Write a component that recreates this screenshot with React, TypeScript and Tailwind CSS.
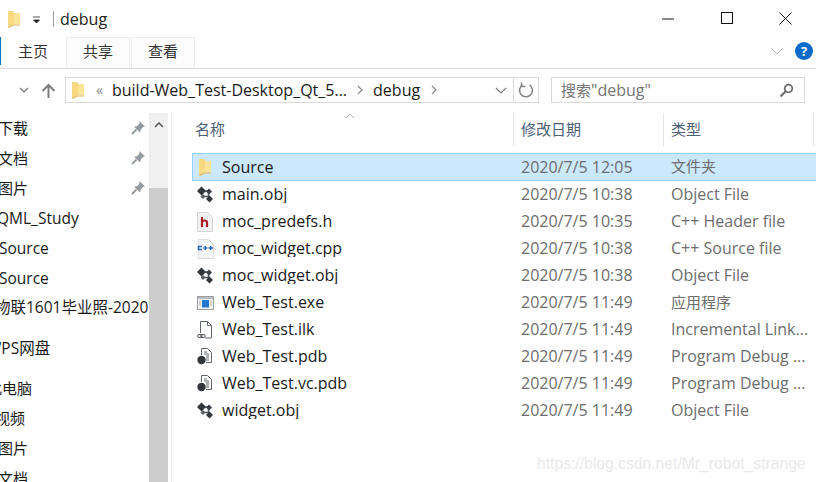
import React from "react";

const FONT = "font-['Open_Sans','Noto_Sans_CJK_SC',sans-serif]";

const FolderIcon = ({ className = "" }: { className?: string }) => (
  <svg width="14" height="18" viewBox="0 0 14 18" className={className}>
    <path d="M1 1h5l1 2h6v11H2.500L1 16z" fill="#f0c860" />
    <path d="M1 1h4.500L7 3v11.500l-6 2.500z" fill="#f7d97f" />
    <path d="M7 3h6v11H7z" fill="#fbe49a" />
    <path d="M1 17l6-2.500h6v1H6.500L2 18z" fill="#dfb24a" />
  </svg>
);

const ObjIcon = () => (
  <svg width="17" height="17" viewBox="0 0 17 17">
    <path d="M5 5h6.500v8M6 10.500h6" stroke="#4d5157" strokeWidth="1.500" fill="none" />
    <path d="M4.500.5L9 5 4.500 9.500 0 5z" fill="#33373c" />
    <path d="M12 2.500l3 3-3 3-3-3z" fill="#3d4147" />
    <path d="M12.500 9.500l3.500 3.500-3.500 3.500L9 13z" fill="#33373c" />
    <path d="M6 8l2.500 2.500L6 13l-2.500-2.500z" fill="#5d6167" />
  </svg>
);

const HeaderIcon = () => (
  <svg width="16" height="20" viewBox="0 0 16 20">
    <path d="M.5.500h10l5 5v14H.5z" fill="#f2f2f2" stroke="#d4d4d4" />
    <path d="M5 5v10M5 10q1-1.500 2.700-1.500 2.300 0 2.300 2v4.500" stroke="#ab1f2a" strokeWidth="2.200" fill="none" />
  </svg>
);

const CppIcon = () => (
  <svg width="17" height="20" viewBox="0 0 17 20">
    <path d="M1.500.500h10l5 5v14h-15z" fill="#f5f5f5" stroke="#dcdcdc" />
    <path d="M5 7.500H1.500v3H5" stroke="#2565b5" strokeWidth="1.500" fill="none" />
    <path d="M6.300 9h4M8.300 7v4M11.500 9h4.500M13.700 7v4" stroke="#2565b5" strokeWidth="1.400" fill="none" />
  </svg>
);

const ExeIcon = () => (
  <svg width="17" height="14" viewBox="0 0 17 14">
    <rect x=".5" y=".5" width="16" height="13" fill="#f2f2f2" stroke="#9a9ea3" />
    <rect x="1" y="1" width="15" height="2" fill="#b9bdc2" />
    <rect x="5" y="4" width="7" height="7.500" fill="#1f78d1" />
    <path d="M2 5h2M2 7h2M2 9h2M13 5h2M13 7h2M13 9h2" stroke="#b5b8bc" />
  </svg>
);

const IlkIcon = () => (
  <svg width="16" height="18" viewBox="0 0 16 18">
    <path d="M3.500 12V.5h7l4 4v12.500H8" fill="#fff" stroke="#63676d" />
    <path d="M10.500.5v4h4" fill="none" stroke="#63676d" />
    <rect x=".7" y="13.500" width="4.500" height="3" rx="1.400" fill="none" stroke="#4b4f55" />
    <rect x="3.700" y="13.500" width="4.500" height="3" rx="1.400" fill="none" stroke="#4b4f55" />
  </svg>
);

const PdbIcon = () => (
  <svg width="16" height="17" viewBox="0 0 16 17">
    <path d="M4.500 7V.5h6l4 4v10H9" fill="#fff" stroke="#63676d" />
    <path d="M7 4h3M7 6h5M9 8h3M9 10h3M9 12h3" stroke="#63676d" />
    <circle cx="4.500" cy="12" r="4.200" fill="#33373c" />
  </svg>
);

const PinIcon = () => (
  <svg width="14" height="14" viewBox="0 0 14 14">
    <path d="M8.500 0l5.500 5.500-2 .5-2.300 2.500-.5 3L3 5.800l3-.5L8.300 3z" fill="#939a9f" />
    <path d="M5.500 8.500L1 13" stroke="#939a9f" strokeWidth="1.800" />
  </svg>
);

const navItems = [
  { label: "下载", pin: true, cls: "h-[30px] -ml-[2px] text-[15px]" },
  { label: "文档", pin: true, cls: "h-[30px] -ml-[2px] text-[15px]" },
  { label: "图片", pin: true, cls: "h-[30px] -ml-[2px] text-[15px]" },
  { label: "QML_Study", cls: "h-[30px] pt-[2px] -ml-[3px] text-[15.500px]" },
  { label: "Source", cls: "h-[30px] pt-[1px] -ml-[1px] text-[15.500px]" },
  { label: "Source", cls: "h-[30px] pt-[1px] -ml-[1px] text-[15.500px]" },
  { label: "物联1601毕业照-2020", cls: "h-[30px] -ml-[5px] mb-[10px] text-[15.500px]" },
  { label: "WPS网盘", cls: "h-[30px] pt-[2px] -ml-[13px] mb-[10px] text-[15.500px]" },
  { label: "此电脑", cls: "h-[30px] -ml-[13px] text-[15px]" },
  { label: "视频", cls: "h-[30px] -ml-[5px] text-[15px]" },
  { label: "图片", cls: "h-[30px] -ml-[2px] text-[15px]" },
  { label: "文档", cls: "h-[30px] -ml-[2px] text-[15px]" },
];

const files = [
  { name: "Source", date: "2020/7/5 12:05", type: "文件夹", typeCls: "text-[15px]", icon: <FolderIcon />, selected: true },
  { name: "main.obj", date: "2020/7/5 10:38", type: "Object File", icon: <ObjIcon /> },
  { name: "moc_predefs.h", date: "2020/7/5 10:35", type: "C++ Header file", icon: <HeaderIcon /> },
  { name: "moc_widget.cpp", date: "2020/7/5 10:38", type: "C++ Source file", icon: <CppIcon /> },
  { name: "moc_widget.obj", date: "2020/7/5 10:38", type: "Object File", icon: <ObjIcon /> },
  { name: "Web_Test.exe", date: "2020/7/5 11:49", type: "应用程序", typeCls: "text-[15px]", icon: <ExeIcon /> },
  { name: "Web_Test.ilk", date: "2020/7/5 11:49", type: "Incremental Link...", icon: <IlkIcon /> },
  { name: "Web_Test.pdb", date: "2020/7/5 11:49", type: "Program Debug ...", icon: <PdbIcon /> },
  { name: "Web_Test.vc.pdb", date: "2020/7/5 11:49", type: "Program Debug ...", icon: <PdbIcon /> },
  { name: "widget.obj", date: "2020/7/5 11:49", type: "Object File", icon: <ObjIcon /> },
];

const App = () => {
  return (
    <div className={`relative w-[816px] h-[482px] overflow-hidden bg-white text-[16px] leading-none text-[#1a1a1a] ${FONT}`}>
      {/* title bar */}
      <div className="flex items-center h-[37px]">
        <FolderIcon className="ml-[7px]" />
        <svg width="9" height="8" viewBox="0 0 9 8" className="ml-[11px] mt-[2px]">
          <path d="M1 1h7M1.500 4h6l-3 3z" stroke="#222" fill="#222" strokeWidth=".8" />
        </svg>
        <div className="ml-[12px] w-px h-[16px] bg-[#a0a0a0]" />
        <div className="ml-[6px] text-[#222]">debug</div>
        <div className="flex ml-auto">
          <div className="flex w-[58px] justify-center mr-[1px]">
            <svg width="14" height="14" viewBox="0 0 14 14"><path d="M1 7h12" stroke="#111" /></svg>
          </div>
          <div className="flex w-[58px] justify-center">
            <svg width="13" height="13" viewBox="0 0 13 13"><rect x=".5" y=".5" width="11" height="11" fill="none" stroke="#111" /></svg>
          </div>
          <div className="flex w-[58px] justify-center mr-[2px]">
            <svg width="13" height="13" viewBox="0 0 13 13"><path d="M.5.5l12 12M12.500.5l-12 12" stroke="#111" /></svg>
          </div>
        </div>
      </div>

      {/* ribbon tabs */}
      <div className="flex items-stretch h-[32px] border-b border-[#dadada]">
        <div className="w-px h-[28px] bg-[#0a6fc4]" />
        <div className="w-[65px] flex items-center pl-[17px] pb-[3px] text-[15px] text-[#333]">主页</div>
        <div className="w-[64px] flex items-center justify-center pb-[3px] text-[15px] text-[#333] bg-[#fcfcfd] border border-b-0 border-[#eeeeee]">共享</div>
        <div className="ml-px w-[64px] flex items-center justify-center pb-[3px] text-[15px] text-[#333] bg-[#fcfcfd] border border-b-0 border-[#eeeeee]">查看</div>
        <div className="ml-auto flex items-center pb-[3px] pr-[3px]">
          <svg width="14" height="8" viewBox="0 0 14 8"><path d="M1 1l6 6 6-6" stroke="#b9bdc2" fill="none" /></svg>
          <div className="ml-[11px] w-[18px] h-[18px] rounded-full bg-[#0a6cc8] flex items-center justify-center text-[13px] font-bold text-white">?</div>
        </div>
      </div>

      {/* address row */}
      <div className="flex items-center h-[44px] pb-[2px]">
        <svg width="10" height="6" viewBox="0 0 10 6" className="ml-[19px]"><path d="M1 1l4 4 4-4" stroke="#8b8b8b" strokeWidth="1.500" fill="none" /></svg>
        <svg width="15" height="15" viewBox="0 0 15 15" className="ml-[12px]">
          <path d="M7.500 15V2M1.500 8l6-6 6 6" stroke="#7d7d7d" strokeWidth="2" fill="none" />
        </svg>
        <div className="ml-[9px] flex items-center w-[474px] h-[26px] border border-[#d9d9d9]">
          <FolderIcon className="ml-[5px]" />
          <span className="ml-[11px] text-[14px] text-[#8a8a8a]">«</span>
          <span className="ml-[9px] whitespace-nowrap">build-Web_Test-Desktop_Qt_5...</span>
          <svg width="7" height="10" viewBox="0 0 7 10" className="ml-[10px]"><path d="M1 1l4 4-4 4" stroke="#8a8a8a" fill="none" strokeWidth="1.200" /></svg>
          <span className="ml-[9px]">debug</span>
          <svg width="7" height="10" viewBox="0 0 7 10" className="ml-[11px]"><path d="M1 1l4 4-4 4" stroke="#8a8a8a" fill="none" strokeWidth="1.200" /></svg>
          <svg width="12" height="7" viewBox="0 0 12 7" className="ml-auto mr-[6px]"><path d="M1 1l5 5 5-5" stroke="#7d7d7d" strokeWidth="1.200" fill="none" /></svg>
          <div className="flex items-center justify-center w-[25px] h-full border-l border-[#d9d9d9]">
            <svg width="16" height="16" viewBox="0 0 16 16">
              <path d="M4.500 2.800A6.500 6.500 0 1 0 11.500 2.800" stroke="#858585" strokeWidth="1.600" fill="none" />
              <path d="M3.500 .5v4h4" stroke="#858585" strokeWidth="1.400" fill="none" />
            </svg>
          </div>
        </div>
        <div className="ml-[12px] flex items-center w-[254px] h-[26px] border border-[#d9d9d9] pl-[9px] pr-[10px] text-[#757575]">
          <span className="text-[15px]">搜索</span>
          <span>"debug"</span>
          <svg width="15" height="15" viewBox="0 0 15 15" className="ml-auto">
            <circle cx="9.500" cy="5.500" r="3.800" stroke="#6e6e6e" strokeWidth="1.800" fill="none" />
            <path d="M6.500 8.500L1.500 13.500" stroke="#6e6e6e" strokeWidth="2.200" />
          </svg>
        </div>
      </div>

      {/* body */}
      <div className="flex h-[369px]">
        <div className="w-[149px] overflow-hidden">
          {navItems.map((item, i) => (
            <div key={i} className={`flex items-center whitespace-nowrap ${item.cls}`}>
              <span>{item.label}</span>
              {item.pin && <span className="ml-auto mr-[4px]"><PinIcon /></span>}
            </div>
          ))}
        </div>
        <div className="w-[19px] h-full flex flex-col bg-[#cdcdcd]">
          <div className="h-[75px] bg-[#f0f0f0] flex justify-center pt-[9px]">
            <svg width="10" height="6" viewBox="0 0 10 6"><path d="M1 5l4-4 4 4" stroke="#555" strokeWidth="1.500" fill="none" /></svg>
          </div>
        </div>
        <div className="w-[3px]" />
        <div className="w-px h-full bg-[#f0f0f0]" />
        <div className="flex-1 min-w-0 pl-[20px]">
          <div className="flex h-[33px] text-[15px] text-[#4c607a] -ml-[20px] pl-[23px]">
            <div className="w-[318px] flex items-center">名称</div>
            <div className="w-[150px] flex items-center pl-[7px] border-l border-[#e5e5e5]">修改日期</div>
            <div className="w-[150px] flex items-center pl-[7px] border-l border-[#e5e5e5]">类型</div>
            <div className="border-l border-[#e5e5e5]" />
          </div>
          <div className="mt-[7px] flex flex-col">
            {files.map((f) => (
              <div
                key={f.name}
                className={
                  f.selected
                    ? "flex items-center h-[28px] -mb-px bg-[#cce8ff] border-y border-[#99d1ff] border-l"
                    : "flex items-center h-[27px] pt-[2px]"
                }
              >
                <div className={f.selected ? "w-[29px] pl-[5px] flex" : "w-[30px] pl-[5px] flex"}>{f.icon}</div>
                <div className="w-[299px] truncate pb-[1px]">{f.name}</div>
                <div className="w-[150px] text-[#6d6d6d] pb-[1px]">{f.date}</div>
                <div className={`flex-1 text-[#6d6d6d] pb-[1px] whitespace-nowrap ${f.typeCls ?? ""}`}>{f.type}</div>
              </div>
            ))}
          </div>
        </div>
      </div>

      {/* sort caret */}
      <svg width="10" height="6" viewBox="0 0 10 6" className="absolute left-[345px] top-[113px]">
        <path d="M1 5l4-4 4 4" stroke="#b0b0b0" fill="none" />
      </svg>

      {/* watermark */}
      <div className="absolute left-[537px] top-[456px] text-[15.700px] font-['Liberation_Sans',sans-serif] text-[#e9e9e9] whitespace-nowrap">
        https://blog.csdn.net/Mr_robot_strange
      </div>
    </div>
  );
};

export default App;
